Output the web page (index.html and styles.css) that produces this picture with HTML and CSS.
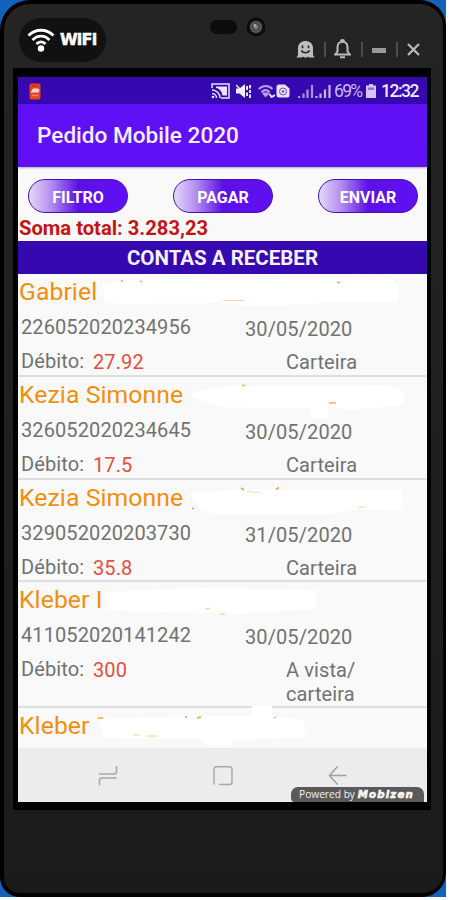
FILE: index.html
```
<!DOCTYPE html>
<html lang="pt-BR">
<head>
  <meta charset="UTF-8" />
  <meta name="viewport" content="width=device-width, initial-scale=1" />
  <title>Pedido Mobile 2020</title>
  <link rel="stylesheet" href="styles.css">
</head>
<body>
  <div class="backdrop">
    <div class="phone">
      <div class="phone-top">
        <div class="wifi-badge">
          <svg width="28" height="26" viewBox="0 0 28 26" fill="none" stroke="#fff" stroke-width="2.8">
            <path d="M1.500 8.500C8.500 1.500 19.500 1.500 26.500 8.500" />
            <path d="M5.500 13C10.500 7.900 17.500 7.900 22.500 13" />
            <path d="M9.500 17C12 14.200 16 14.200 18.500 17" />
            <circle cx="14" cy="21.500" r="3.200" fill="#fff" stroke="none" />
          </svg>
          <span>WiFi</span>
        </div>
        <div class="sensors">
          <span class="speaker"></span>
          <svg width="20" height="20" viewBox="0 0 20 20">
            <circle cx="10" cy="10" r="9.500" fill="#0c0c0c" />
            <circle cx="10" cy="10" r="6.200" fill="#555" />
            <circle cx="10" cy="10" r="3.200" fill="#777" stroke="#333" />
            <circle cx="9" cy="8.500" r="1.400" fill="#aaa" />
          </svg>
        </div>
        <div class="window-tools">
          <svg class="ghost" width="19" height="19" viewBox="0 0 19 19">
            <path d="M2 15V8C2-1.500 17-1.500 17 8V15L18.500 17.500H.5L2 15Z" fill="#bdbdbd" />
            <path d="M6.500 5.500v2.800M12.500 5.500v2.800M5.300 10.500C7.500 13.500 11.500 13.500 13.700 10.500" fill="none" stroke="#222" stroke-width="1.600" />
            <path d="M5.500 18L7 16.500L8.500 18ZM10.500 18L12 16.500L13.500 18Z" fill="#232323" />
          </svg>
          <i class="sep"></i>
          <svg class="bell" width="17" height="20" viewBox="0 0 17 20" fill="none" stroke="#bdbdbd" stroke-width="2">
            <path d="M1.200 15.500L3.500 12.500V8C3.500 1 13.500 1 13.500 8V12.500L15.800 15.500Z" />
            <path d="M7 2.200C7 .7 10 .7 10 2.200M6 18.200H11" />
          </svg>
          <i class="sep"></i>
          <span class="minimize"></span>
          <i class="sep"></i>
          <svg class="close" width="13" height="13" viewBox="0 0 13 13" stroke="#b9b9b9" stroke-width="2.300">
            <path d="M1 1L12 12M12 1L1 12" />
          </svg>
        </div>
      </div>

      <div class="screen">
        <div class="status-bar">
          <svg class="app-badge" width="12" height="17" viewBox="0 0 12 17">
            <rect x=".5" y=".5" width="11" height="16" rx="2" fill="#e8431f" />
            <path d="M2.500 3h7" stroke="#b32a14" />
            <path d="M1.500 9.500L4 5.500H9L10.500 7L9.500 9.500Z" fill="#f8d8d0" />
            <path d="M3 12.500h6" stroke="#f08a62" stroke-width="1.500" />
          </svg>
          <div class="status-icons">
            <svg width="19" height="16" viewBox="0 0 19 16" fill="none" stroke="#e9e2fa" stroke-width="1.500">
              <path d="M1 5V1H18V15H10" />
              <path d="M1 7C5.500 7 9 10.500 9 15M1 10.500C3.500 10.500 5.500 12.500 5.500 15" />
              <path d="M5 3.500H16V12.500H11.500C11 8.500 8.500 5.800 5 4.800Z" fill="#e9e2fa" stroke="none" />
              <circle cx="2" cy="14" r="1.300" fill="#e9e2fa" stroke="none" />
            </svg>
            <svg class="mute" width="15" height="14" viewBox="0 0 15 14" fill="none" stroke="#f2edff" stroke-width="1.900">
              <path d="M0 4.500H3.500L9 0V14L3.500 9.500H0Z" fill="#f2edff" stroke="none" />
              <path d="M0 1L4.500 5.500" stroke-width="1.400" />
              <path d="M11 2V6M11 8.500V12M14 1V4.500M14 6V9M14 10.500V14" />
            </svg>
            <svg class="wifi" width="17" height="13" viewBox="0 0 17 13" fill="none" stroke="#b5a1e4" stroke-width="2">
              <path d="M.7 4C5 0 10.500 0 14.500 4M3.500 7C6 4.500 9 4.500 11.500 7" />
              <path d="M5.500 8.500L7.500 11L10 8.500Z" fill="#b5a1e4" />
              <path d="M11.500 9L13.500 12L17 10" stroke="#e9e2fa" />
            </svg>
            <svg class="sync" width="14" height="14" viewBox="0 0 14 14">
              <path d="M.5 3Q.5 .5 3 .5H9L13.500 4.500V11Q13.500 13.500 11 13.500H3Q.5 13.500 .5 11Z" fill="#e9e2fa" />
              <circle cx="7" cy="7.500" r="3.500" fill="none" stroke="#6c4bc6" />
              <circle cx="7" cy="7.500" r="1.300" fill="#6c4bc6" />
            </svg>
            <svg class="signal" width="33" height="14" viewBox="0 0 33 14" stroke="#a993e0" stroke-width="2.200">
              <path d="M1.100 14V12M5.500 14V9.500M9.500 14V5.500M14 14V1" />
              <path d="M18.500 14V12M22.500 14V9.500M27 14V5.500M31.500 14V1" stroke="#c4b4ee" />
            </svg>
            <span class="percent">69%</span>
            <svg class="battery" width="10" height="14" viewBox="0 0 10 14">
              <path d="M3 0H7V1.500H10V14H0V1.500H3Z" fill="#d3c6f4" />
              <path d="M2 3.500H8V6H2Z" fill="#8d70d4" />
            </svg>
            <span class="clock">12:32</span>
          </div>
        </div>

        <header class="app-bar">Pedido Mobile 2020</header>

        <div class="actions">
          <button class="pill">FILTRO</button>
          <button class="pill">PAGAR</button>
          <button class="pill">ENVIAR</button>
        </div>
        <div class="total">Soma total: 3.283,23</div>
        <div class="section-title">CONTAS A RECEBER</div>

        <ul class="accounts">
          <li class="account">
            <div class="customer">Gabriel</div>
            <span class="number">226052020234956</span>
            <span class="date">30/05/2020</span>
            <span class="label">Débito:</span>
            <span class="amount">27.92</span>
            <span class="method">Carteira</span>
            <svg class="smudge" width="409" height="44" viewBox="0 0 409 44">
              <path d="M85 10Q130 3 200 6L370 3Q386 12 379 28L310 28Q240 35 202 29L106 30L87 29Z" fill="#fff" />
              <path d="M103 7h2M122 7.500h2M319 8.500h3" stroke="#f2a23c" stroke-width="1.500" />
              <path d="M205 26.500h20" stroke="#fbd9a0" />
            </svg>
          </li>
          <li class="account">
            <div class="customer">Kezia Simonne</div>
            <span class="number">326052020234645</span>
            <span class="date">30/05/2020</span>
            <span class="label">Débito:</span>
            <span class="amount">17.5</span>
            <span class="method">Carteira</span>
            <svg class="smudge" width="409" height="44" viewBox="0 0 409 44">
              <path d="M170 18Q190 8 240 9L365 8Q386 12 387 19Q387 29 370 30L330 33L310 30V42H293V32L200 30Z" fill="#fff" />
              <path d="M224 8.500h3M311 26h7" stroke="#f5b25c" stroke-width="1.500" />
            </svg>
          </li>
          <li class="account">
            <div class="customer">Kezia Simonne</div>
            <span class="number">329052020203730</span>
            <span class="date">31/05/2020</span>
            <span class="label">Débito:</span>
            <span class="amount">35.8</span>
            <span class="method">Carteira</span>
            <svg class="smudge" width="409" height="44" viewBox="0 0 409 44">
              <path d="M171 12L250 9L383 10L386 30L340 29L310 35H200L184 30Z" fill="#fff" />
              <path d="M223 8l3 2M258 9.500l3-2M174 28.500h2" fill="none" stroke="#f2a23c" stroke-width="1.600" />
              <path d="M229 11.500l12 1M340 27h8" fill="none" stroke="#fbd9a0" />
            </svg>
          </li>
          <li class="account">
            <div class="customer">Kleber I</div>
            <span class="number">411052020141242</span>
            <span class="date">30/05/2020</span>
            <span class="label">Débito:</span>
            <span class="amount">300</span>
            <span class="method">A vista/<br>carteira</span>
            <svg class="smudge" width="409" height="44" viewBox="0 0 409 44">
              <path d="M88 10L180 6L298 8V27L215 32L110 29L90 28Z" fill="#fff" />
              <path d="M188 27l4-1M202 32h5" fill="none" stroke="#f8c584" stroke-width="1.200" />
            </svg>
          </li>
          <li class="account last">
            <div class="customer">Kleber</div>
            <svg class="smudge" width="409" height="44" viewBox="0 0 409 44">
              <path d="M81 11L180 8L234 8V-2H254V8L286 12L287 29L215 32L214 37H187L184 31L85 30Z" fill="#fff" />
              <path d="M80 10h5M167 9h2M179 10l4-1M256 10l2-1" fill="none" stroke="#f2a23c" stroke-width="1.300" />
              <path d="M116 27h6M128 28h12" stroke="#fac98a" />
            </svg>
          </li>
        </ul>

        <nav class="nav-bar">
          <svg width="20" height="20" viewBox="0 0 20 20" fill="none" stroke="#a8a8a8" stroke-width="1.500">
            <path d="M1 8H16Q18.500 8 18.500 5.500V0M1.500 19.500V14.500Q1.500 12 4 12H18.500" />
          </svg>
          <svg width="20" height="20" viewBox="0 0 20 20" fill="none" stroke="#a8a8a8" stroke-width="1.500">
            <path d="M1 18.500V3Q1 .7 3.500 .7H16.500Q19 .7 19 3V16Q19 18.500 16.500 18.500H6" />
          </svg>
          <svg width="20" height="20" viewBox="0 0 20 20" fill="none" stroke="#a0a0a0" stroke-width="1.500">
            <path d="M9.500 .5L1.500 9.500L9.500 18.500M1.500 9.500H18.500" />
          </svg>
          <div class="powered">Powered by <b>Mobizen</b></div>
        </nav>
      </div>
    </div>
  </div>
</body>
</html>
```
FILE: styles.css
```
:root {
  --primary: #6010f4;
  --primary-dark: #3608b0;
  --surface: #f9f9f9;
  --orange: #f58d0c;
  --red: #e84c40;
  --grey: #727272;
}

* {
  box-sizing: border-box;
}

body {
  margin: 0;
  background: #fff;
  font-family: Roboto, sans-serif;
}

.backdrop {
  width: 446px;
  height: 897px;
  background: #1262ba;
}

/* Device frame */
.phone {
  height: 897px;
  padding: 0 14px 0 9px;
  border: 4px solid #000;
  border-right-width: 3px;
  border-radius: 30px 26px 24px 20px;
  background: linear-gradient(#242424, #1b1b1b);
}

.phone-top {
  display: flex;
  align-items: flex-start;
  height: 64px;
}

.wifi-badge {
  display: flex;
  align-items: center;
  width: 87px;
  height: 44px;
  margin: 14px 0 0 6px;
  padding: 0 0 1px 8px;
  gap: 5px;
  border-radius: 22px;
  background: #111;
  color: #fff;
  font: 700 16px "DejaVu Sans", sans-serif;
}

.wifi-badge span {
  -webkit-text-stroke: 0.5px #fff;
  padding-bottom: 1px;
  letter-spacing: -0.8px;
}

.sensors {
  display: flex;
  align-items: center;
  margin: 13px 0 0 104px;
  gap: 9px;
}

.speaker {
  width: 27px;
  height: 14px;
  border-radius: 7px;
  background: #0c0c0c;
}

.window-tools {
  display: flex;
  align-items: center;
  height: 20px;
  margin: 35px 0 0 30px;
}

.sep {
  width: 2px;
  height: 15px;
  background: #4c4c4c;
}

.ghost {
  margin-right: 9px;
}

.bell {
  margin: 0 10px 0 8px;
}

.minimize {
  width: 14px;
  height: 5px;
  margin: 3px 10px 0 9px;
  background: #999;
}

.close {
  margin-left: 9px;
}

.screen {
  display: flex;
  flex-direction: column;
  width: 418px;
  height: 742px;
  border: solid #000;
  border-width: 9px 4px 8px 5px;
  background: var(--surface);
}

.status-bar {
  display: flex;
  justify-content: space-between;
  align-items: center;
  height: 27px;
  padding: 1px 9px 0 11px;
  background: var(--primary-dark);
}

.status-icons {
  display: flex;
  align-items: center;
  color: #efe9fc;
  font-size: 17.5px;
}

.mute {
  margin-left: 6px;
}

.wifi {
  margin-left: 7px;
}

.sync {
  margin-left: 1px;
}

.signal {
  margin-left: 8px;
}

.percent {
  width: 28px;
  margin-left: 3px;
  color: #cbbcf0;
  letter-spacing: -1.7px;
}

.battery {
  margin-left: 4px;
}

.clock {
  width: 37px;
  margin-left: 5px;
  font-weight: 500;
  letter-spacing: -1.5px;
}

.app-bar {
  height: 63px;
  padding-left: 19px;
  background: var(--primary);
  box-shadow: 0 1px 2px rgba(0, 0, 0, 0.3);
  color: #f3eefe;
  font-size: 22.6px;
  font-weight: 500;
  line-height: 64px;
}

.actions {
  display: flex;
  justify-content: space-between;
  height: 50px;
  padding: 12px 9px 0 10px;
}

.pill {
  width: 100px;
  height: 34px;
  padding: 2px 0 0;
  border: 1.5px solid #4510b8;
  border-radius: 17px;
  background: linear-gradient(90deg, #e6d8fb 0%, #b48ff0 22%, #5c10e6 50%, var(--primary) 100%);
  color: #fff;
  font: 700 16px Roboto, sans-serif;
}

.total {
  height: 24px;
  padding-left: 1px;
  color: #c41414;
  font-size: 20.2px;
  font-weight: 700;
  line-height: 22px;
}

.section-title {
  height: 33px;
  background: var(--primary-dark);
  color: #f5f1fe;
  font-size: 20.5px;
  font-weight: 700;
  line-height: 35px;
  text-align: center;
}

.accounts {
  flex: 1;
  margin: 0;
  padding: 0.4px 0 0;
  overflow: hidden;
  list-style: none;
}

.account {
  position: relative;
  display: grid;
  grid-template-columns: 72px 152px 41px 1fr;
  grid-template-rows: 36px 35px auto;
  height: 102.600px;
  padding-left: 3px;
  border-bottom: 2px solid #dedede;
  color: var(--grey);
  font-size: 20px;
  letter-spacing: 0.1px;
  line-height: 24px;
}

.account:nth-child(4) {
  height: 126px;
}

.account.last {
  border: 0;
}

.customer {
  grid-column: 1 / -1;
  margin-left: -2px;
  color: var(--orange);
  font-size: 24.7px;
  line-height: 36px;
}

.number {
  grid-column: 1 / 3;
  padding-top: 5px;
}

.date {
  grid-column: 3 / 5;
  padding-top: 7px;
}

.label {
  padding-top: 4px;
}

.amount {
  padding-top: 5px;
  color: var(--red);
}

.method {
  grid-column: 4;
  padding-top: 5px;
}

/* Painted-out surnames */
.smudge {
  position: absolute;
  top: 0;
  left: 0;
  overflow: visible;
}

.nav-bar {
  position: relative;
  display: flex;
  height: 54px;
  padding: 18px 0 0 80px;
  gap: 95px;
  background: #ececec;
}

.powered {
  position: absolute;
  right: 3px;
  bottom: 0;
  width: 133px;
  height: 15px;
  padding-left: 8px;
  border-radius: 7px 7px 0 4px;
  background: #5a5a5a;
  color: #f2f2f2;
  font: 10.200px/15px "Open Sans", sans-serif;
  white-space: nowrap;
}

.powered b {
  -webkit-text-stroke: 0.6px #fff;
  font-family: "DejaVu Sans", sans-serif;
  font-style: italic;
  letter-spacing: 1.2px;
}
```
